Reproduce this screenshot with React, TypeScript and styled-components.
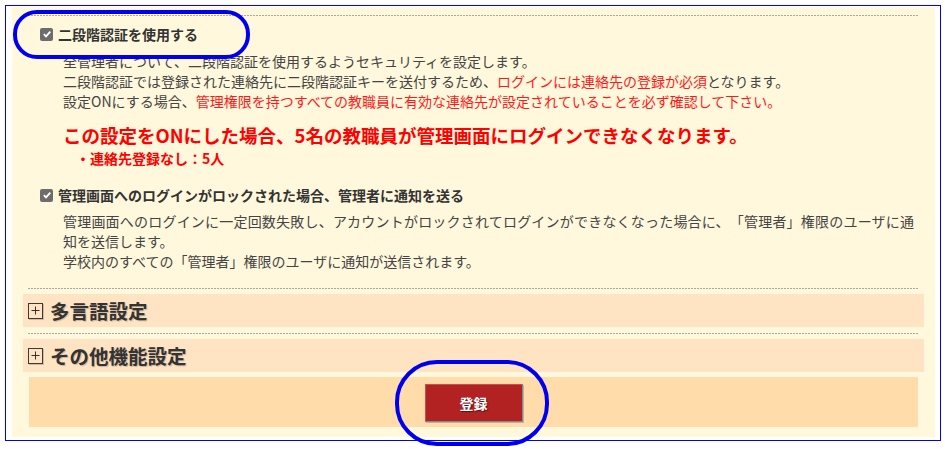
import React from "react";
import styled, { createGlobalStyle } from "styled-components";

const Global = createGlobalStyle`
  html, body { margin: 0; padding: 0; background: #fff; }
  body {
    font-family: "Noto Sans CJK JP", "Noto Sans", sans-serif;
    color: #333;
    text-spacing-trim: space-all;
  }
`;

const Stage = styled.div`
  position: relative;
  width: 945px;
  height: 449px;
  padding: 5px 0 0 5px;
  box-sizing: border-box;
  overflow: hidden;
`;

const Frame = styled.div`
  width: 936px;
  height: 436px;
  box-sizing: border-box;
  border: 1px solid #0000ff;
  padding: 1px 5px 3px 6px;
`;

const Panel = styled.div`
  background: #fff8dc;
  height: 100%;
  box-sizing: border-box;
  padding: 8px 11px 0 11px;
  display: flex;
  flex-direction: column;
`;

const Divider = styled.div<{ $top?: number }>`
  margin: ${(p) => p.$top ?? 0}px 6px 0 5px;
  height: 1px;
  background: repeating-linear-gradient(to right, #a8a8a0 0 2px, transparent 2px 3px);
`;

const CheckRow = styled.label<{ $top: number }>`
  display: flex;
  align-items: center;
  gap: 5px;
  margin-top: ${(p) => p.$top}px;
  padding-left: 17px;
  font-size: 14px;
  font-weight: bold;
  line-height: 20px;
  color: #333;
`;

const Box = styled.span`
  width: 13px;
  height: 13px;
  border-radius: 2px;
  background: #6d6d6d;
  display: inline-flex;
  align-items: center;
  justify-content: center;
  flex: none;
`;

const Desc = styled.p<{ $top: number }>`
  margin: ${(p) => p.$top}px 10px 0 40px;
  font-size: 14px;
  line-height: 20px;
  text-align: justify;
  text-spacing-trim: space-all;
  color: #444;
`;

const Red = styled.span`
  color: #ff1a1a;
`;

const Warning = styled.div`
  margin-top: 12px;
  padding-left: 40px;
  font-size: 18.5px;
  font-weight: bold;
  line-height: 24px;
  color: #ff0000;
  text-spacing-trim: space-all;
`;

const SubWarning = styled.div`
  margin-top: 1px;
  padding-left: 53px;
  font-size: 14px;
  font-weight: bold;
  line-height: 20px;
  color: #ff0000;
`;

const SectionHead = styled.div`
  margin-top: 5px;
  height: 33px;
  background: #ffe4c4;
  display: flex;
  align-items: center;
  gap: 7px;
  padding-left: 5px;
`;

const PlusBox = styled.span`
  width: 15px;
  height: 16px;
  box-sizing: border-box;
  border: 1px solid #3a3a3a;
  box-shadow: 1px 1px 0 rgba(0, 0, 0, 0.18);
  display: inline-flex;
  align-items: center;
  justify-content: center;
  flex: none;
`;

const SectionTitle = styled.span`
  font-size: 19.5px;
  font-weight: bold;
  line-height: 24px;
  color: #333;
  text-shadow: 1px 1px 1px rgba(0, 0, 0, 0.2);
`;

const ButtonBar = styled.div`
  margin: 5px 6px 0 6px;
  height: 50px;
  background: #ffdcaa;
  display: flex;
  justify-content: center;
  align-items: flex-start;
  padding-top: 7px;
  box-sizing: border-box;
`;

const SubmitButton = styled.button`
  width: 98px;
  height: 38px;
  background: #b22222;
  border: 1px solid #c65050;
  border-right-color: #8a8a8a;
  border-bottom-color: #8a8a8a;
  box-shadow: 1px 1px 0 #b8b0a0;
  color: #fff;
  font-family: "Noto Sans CJK JP", sans-serif;
  font-size: 14px;
  font-weight: bold;
  text-shadow: 1px 1px 1px #5a1010;
  cursor: pointer;
  padding: 0;
`;

const Ring = styled.div<{ $x: number; $y: number; $w: number; $h: number; $r: number }>`
  position: absolute;
  left: ${(p) => p.$x}px;
  top: ${(p) => p.$y}px;
  width: ${(p) => p.$w}px;
  height: ${(p) => p.$h}px;
  border: 4px solid #0000f0;
  border-radius: ${(p) => p.$r}px;
  box-sizing: border-box;
  pointer-events: none;
`;

const Check = () => (
  <Box>
    <svg width="10" height="10" viewBox="0 0 10 10">
      <path d="M1.8 5.2 L4 7.4 L8.3 2.6" fill="none" stroke="#fff" strokeWidth="1.8" />
    </svg>
  </Box>
);

const Plus = () => (
  <PlusBox>
    <svg width="11" height="11" viewBox="0 0 11 11">
      <path d="M5.5 1.5 V9.5 M1.5 5.5 H9.5" stroke="#333" strokeWidth="1" />
    </svg>
  </PlusBox>
);

export default function App() {
  return (
    <Stage>
      <Global />
      <Frame>
        <Panel>
          <Divider />
          <CheckRow $top={8}>
            <Check />
            二段階認証を使用する
          </CheckRow>
          <Desc $top={7}>
            全管理者について、二段階認証を使用するようセキュリティを設定します。
            <br />
            二段階認証では登録された連絡先に二段階認証キーを送付するため、
            <Red>ログインには連絡先の登録が必須</Red>となります。
            <br />
            設定ONにする場合、
            <Red>管理権限を持つすべての教職員に有効な連絡先が設定されていることを必ず確認して下さい。</Red>
          </Desc>
          <Warning>この設定をONにした場合、5名の教職員が管理画面にログインできなくなります。</Warning>
          <SubWarning>・連絡先登録なし：5人</SubWarning>
          <CheckRow $top={17}>
            <Check />
            管理画面へのログインがロックされた場合、管理者に通知を送る
          </CheckRow>
          <Desc $top={6}>
            管理画面へのログインに一定回数失敗し、アカウントがロックされてログインができなくなった場合に、「管理者」権限のユーザに通知を送信します。
            <br />
            学校内のすべての「管理者」権限のユーザに通知が送信されます。
          </Desc>
          <Divider $top={17} />
          <SectionHead>
            <Plus />
            <SectionTitle>多言語設定</SectionTitle>
          </SectionHead>
          <Divider $top={6} />
          <SectionHead>
            <Plus />
            <SectionTitle>その他機能設定</SectionTitle>
          </SectionHead>
          <ButtonBar>
            <SubmitButton type="button">登録</SubmitButton>
          </ButtonBar>
        </Panel>
      </Frame>
      <Ring $x={13} $y={10} $w={237} $h={49} $r={24} />
      <Ring $x={395} $y={360} $w={154} $h={86} $r={42} />
    </Stage>
  );
}
